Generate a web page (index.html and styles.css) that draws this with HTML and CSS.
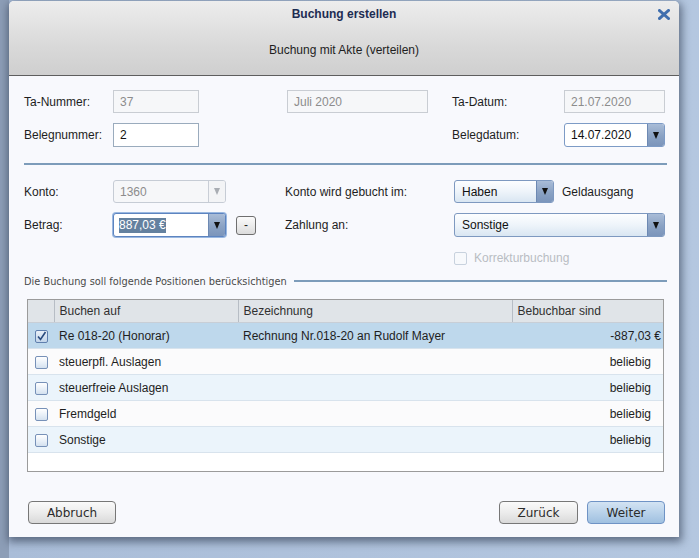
FILE: index.html
```html
<!DOCTYPE html>
<html lang="de">
<head>
<meta charset="utf-8">
<title>Buchung erstellen</title>
<link rel="stylesheet" href="styles.css">
</head>
<body>
<div class="dialog">
  <div class="header">
    <div class="title">Buchung erstellen</div>
    <div class="subtitle">Buchung mit Akte (verteilen)</div>
    <svg class="close" width="12" height="11" viewBox="0 0 12 11"><path d="M1.5 1.5 L10.5 9.5 M10.5 1.5 L1.5 9.5" stroke="#3f6eae" stroke-width="3" stroke-linecap="square" fill="none"/></svg>
  </div>
  <div class="body">
    <div class="grid-top">
      <div class="lbl">Ta-Nummer:</div>
      <div class="field disabled">37</div>
      <div></div>
      <div class="field disabled">Juli 2020</div>
      <div></div>
      <div class="lbl">Ta-Datum:</div>
      <div class="field disabled">21.07.2020</div>

      <div class="lbl">Belegnummer:</div>
      <div class="field edit">2</div>
      <div></div><div></div><div></div>
      <div class="lbl">Belegdatum:</div>
      <div class="combo edit-combo"><span class="ctext">14.07.2020</span><span class="arrow"><i class="tri"></i></span></div>
    </div>

    <div class="sep"></div>

    <div class="grid-mid">
      <div class="lbl">Konto:</div>
      <div class="combo dis-combo"><span class="ctext">1360</span><span class="arrow"><i class="tri"></i></span></div>
      <div></div><div></div><div></div>
      <div class="lbl">Konto wird gebucht im:</div>
      <div class="combo btn-combo"><span class="ctext">Haben</span><span class="arrow"><i class="tri"></i></span></div>
      <div></div>
      <div class="lbl">Geldausgang</div>

      <div class="lbl">Betrag:</div>
      <div class="combo focus-combo"><span class="ctext"><span class="sel">887,03 €</span></span><span class="arrow"><i class="tri"></i></span></div>
      <div></div>
      <div class="minus">-</div>
      <div></div>
      <div class="lbl">Zahlung an:</div>
      <div class="combo btn-combo wide"><span class="ctext">Sonstige</span><span class="arrow"><i class="tri"></i></span></div>
    </div>

    <div class="korr">
      <span class="cb dis"></span><span class="korr-text">Korrekturbuchung</span>
    </div>

    <div class="section">
      <span class="section-title">Die Buchung soll folgende Positionen berücksichtigen</span>
      <span class="section-line"></span>
    </div>

    <div class="tablebox">
      <table class="tbl">
        <colgroup><col class="c0"><col class="c1"><col class="c2"><col class="c3"></colgroup>
        <thead>
          <tr><th></th><th>Buchen auf</th><th>Bezeichnung</th><th>Bebuchbar sind</th></tr>
        </thead>
        <tbody>
          <tr class="selected"><td class="cbcell"><span class="cb checked"><svg width="11" height="11" viewBox="0 0 11 11"><path d="M2 5.5 L4.5 8.5 L9.5 1" stroke="#2a4b7e" stroke-width="1.6" fill="none"/></svg></span></td><td>Re 018-20 (Honorar)</td><td>Rechnung Nr.018-20 an Rudolf Mayer</td><td class="amt">-887,03 €</td></tr>
          <tr class="odd"><td class="cbcell"><span class="cb"></span></td><td>steuerpfl. Auslagen</td><td></td><td class="any">beliebig</td></tr>
          <tr class="even"><td class="cbcell"><span class="cb"></span></td><td>steuerfreie Auslagen</td><td></td><td class="any">beliebig</td></tr>
          <tr class="odd"><td class="cbcell"><span class="cb"></span></td><td>Fremdgeld</td><td></td><td class="any">beliebig</td></tr>
          <tr class="even"><td class="cbcell"><span class="cb"></span></td><td>Sonstige</td><td></td><td class="any">beliebig</td></tr>
        </tbody>
      </table>
    </div>

    <div class="buttons">
      <button class="btn">Abbruch</button>
      <div class="spacer"></div>
      <button class="btn back">Zurück</button>
      <button class="btn primary">Weiter</button>
    </div>
  </div>
</div>
</body>
</html>
```

FILE: styles.css
```css
html, body {
  margin: 0;
  padding: 0;
}
body {
  width: 699px;
  height: 558px;
  overflow: hidden;
  background: linear-gradient(90deg, #8d9eb7 0, #8d9eb7 9px, #aabdd8 9px, #b4c7e0 100%);
  font-family: "Liberation Sans", Arial, sans-serif;
  font-size: 12px;
  color: #1e1e1e;
}
.dialog {
  position: relative;
  margin: 1px 0 0 9px;
  width: 670px;
  height: 536px;
  background: #f8f9fd;
  border-radius: 5px 5px 0 0;
  box-shadow: 1px 3px 9px 2px rgba(30, 40, 60, 0.55);
  display: flex;
  flex-direction: column;
}
.header {
  position: relative;
  height: 74px;
  border-bottom: 1px solid #5e5e5e;
  border-radius: 5px 5px 0 0;
  background: linear-gradient(#ededed, #d9d9d9 60%, #cfcfcf);
  text-align: center;
}
.title {
  padding-top: 5px;
  line-height: 16px;
  font-size: 12px;
  font-weight: bold;
  color: #1d2c52;
}
.subtitle {
  margin-top: 20px;
  line-height: 16px;
  font-size: 12px;
  color: #1e1e1e;
}
.close {
  position: absolute;
  left: 649px;
  top: 8px;
}
.body {
  padding: 14px 12px 0 15px;
  display: flex;
  flex-direction: column;
}
.lbl {
  display: flex;
  align-items: center;
  white-space: nowrap;
  color: #1e1e1e;
}
.grid-top {
  display: grid;
  grid-template-columns: 89px 86px 88px 141px 24px 112px 101px;
  grid-template-rows: 23px 24px;
  row-gap: 10px;
}
.field {
  box-sizing: border-box;
  display: flex;
  align-items: center;
  padding-left: 6px;
  border: 1px solid #c9cdd3;
  background: #f6f7f9;
  color: #8c8c8c;
}
.field.edit {
  background: #ffffff;
  border-color: #9aabbd;
  color: #111;
}
.combo {
  box-sizing: border-box;
  display: flex;
  border: 1px solid #7f9cc4;
  border-radius: 3px;
  overflow: hidden;
  background: #fff;
  color: #111;
}
.ctext {
  flex: 1;
  display: flex;
  align-items: center;
  padding-left: 6px;
  white-space: nowrap;
}
.arrow {
  width: 16px;
  display: flex;
  align-items: center;
  justify-content: center;
  border-left: 1px solid #6d89b3;
  background: linear-gradient(#a9bcd7, #8aa2c4 55%, #7b95bb);
}
.tri {
  width: 0;
  height: 0;
  border-left: 3.5px solid transparent;
  border-right: 3.5px solid transparent;
  border-top: 7px solid #111;
}
.edit-combo {
  border-color: #7d9bc6;
}
.btn-combo {
  background: linear-gradient(#fdfeff, #eef4fa 50%, #d9e6f2);
  border-color: #7e99c0;
}
.btn-combo .ctext {
  padding-left: 7px;
}
.dis-combo {
  background: #f6f7f9;
  border-color: #c6ccd5;
  color: #8c8c8c;
}
.dis-combo .arrow {
  background: #f3f4f6;
  border-left-color: #c9ced6;
}
.dis-combo .tri {
  border-top-color: #a9adb3;
}
.focus-combo {
  border: 1px solid #5d84c0;
  box-shadow: 0 0 0 1px #9ab8e0;
}
.focus-combo .ctext {
  padding-left: 5px;
}
.sel {
  background: #64819f;
  color: #fff;
  line-height: 15px;
}
.sep {
  margin-top: 16px;
  height: 2px;
  background: #7d9cba;
}
.grid-mid {
  margin-top: 15px;
  display: grid;
  grid-template-columns: 89px 113px 10px 20px 29px 169px 100px 8px 103px;
  grid-template-rows: 23px 24px;
  row-gap: 10px;
}
.wide {
  grid-column: 7 / 10;
}
.minus {
  align-self: center;
  box-sizing: border-box;
  height: 19px;
  display: flex;
  align-items: center;
  justify-content: center;
  border: 1px solid #6f6f6f;
  border-radius: 3px;
  background: linear-gradient(#fbfbfb, #dcdcdc);
  color: #222;
  font-size: 12px;
}
.korr {
  margin-top: 14px;
  height: 14px;
  padding-left: 430px;
  display: flex;
  align-items: center;
}
.cb {
  box-sizing: border-box;
  display: inline-flex;
  align-items: center;
  justify-content: center;
  width: 13px;
  height: 13px;
  border: 1px solid #7791b8;
  border-radius: 2px;
  background: linear-gradient(#ffffff, #e6eef7 60%, #d4e1ef);
}
.cb.dis {
  border-color: #c8d2de;
  background: #f7f9fc;
}
.cb.checked {
  border-color: #5f7fae;
  background: linear-gradient(#e9f0f8, #c2d4ea);
}
.korr-text {
  margin-left: 7px;
  color: #b9bdc3;
}
.section {
  margin-top: 9px;
  height: 14px;
  display: flex;
  align-items: center;
}
.section-title {
  font-family: "DejaVu Sans", sans-serif;
  font-size: 9.8px;
  color: #4a4a4a;
  white-space: nowrap;
}
.section-line {
  flex: 1;
  margin-left: 7px;
  height: 2px;
  background: #7d9cba;
}
.tablebox {
  margin: 11px 3px 0 3px;
  box-sizing: border-box;
  height: 173px;
  border: 1px solid #9b9b9b;
  background: #ffffff;
}
.tbl {
  width: 100%;
  table-layout: fixed;
  border-collapse: collapse;
}
.c0 { width: 26px; }
.c1 { width: 184px; }
.c2 { width: 274px; }
.tbl th {
  height: 22px;
  padding: 0 0 0 5px;
  text-align: left;
  font-weight: normal;
  color: #303030;
  background: #e0e4e8;
  border-left: 1px solid #b7bdc5;
  border-bottom: 1px solid #c8ced6;
}
.tbl th:first-child {
  border-left: none;
}
.tbl td {
  height: 25px;
  padding: 0 0 0 5px;
  border-bottom: 1px solid #d8e3ed;
  white-space: nowrap;
  color: #1e1e1e;
}
.tbl td.cbcell {
  padding-left: 7px;
}
.tbl td .cb {
  vertical-align: middle;
}
.selected td { background: #bed8ec; }
.odd td { background: #fbfbfc; }
.even td { background: #ebf4fb; }
.tbl td.amt {
  text-align: right;
  padding-right: 2px;
}
.tbl td.any {
  text-align: right;
  padding-right: 12px;
}
.buttons {
  margin-top: 29px;
  display: flex;
  padding: 0 2px 0 4px;
}
.spacer { flex: 1; }
.btn {
  box-sizing: border-box;
  height: 23px;
  width: 88px;
  padding: 0;
  border: 1px solid #777;
  border-radius: 4px;
  background: linear-gradient(#fafafa, #ececec 50%, #d9d9d9);
  font-family: "DejaVu Sans", sans-serif;
  font-size: 12px;
  color: #2b2b2b;
}
.btn.back {
  width: 79px;
}
.btn.primary {
  width: 78px;
  margin-left: 9px;
  border-color: #6f93c5;
  background: linear-gradient(#d3e3f3, #b9d2ea 50%, #9fc0e0);
}
```
